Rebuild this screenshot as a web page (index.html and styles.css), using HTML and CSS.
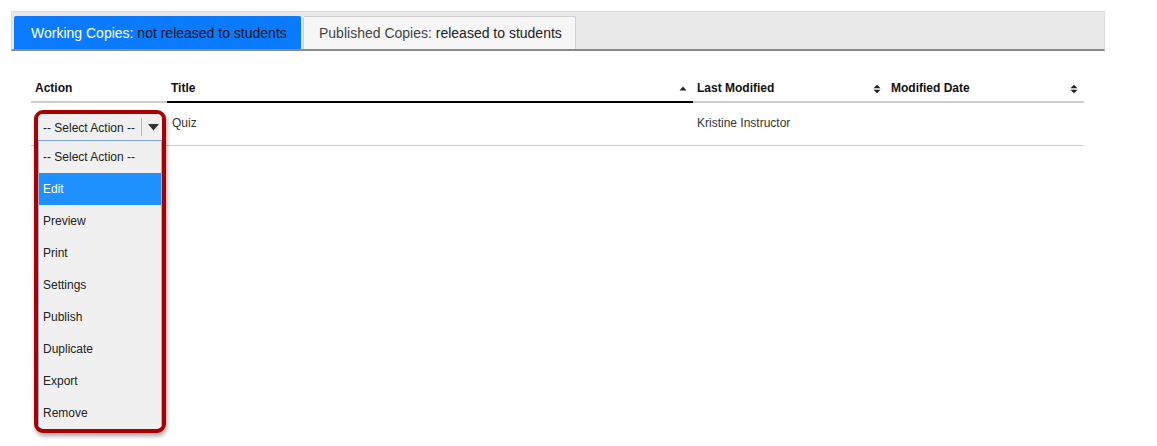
FILE: index.html
```html
<!DOCTYPE html>
<html>
<head>
<meta charset="utf-8">
<link rel="stylesheet" href="styles.css">
</head>
<body>
<div class="tabs">
  <div class="tab active"><span><span class="lbl">Working Copies:</span> not released to students</span></div>
  <div class="tab"><span><span class="lbl">Published Copies:</span> released to students</span></div>
</div>
<div class="table-wrap">
<table class="grid">
  <thead>
    <tr>
      <th class="c-action"><span>Action</span></th>
      <th class="c-title sorted"><span>Title</span>
        <svg class="sort" width="8" height="10" viewBox="0 0 8 10"><path d="M0.5 6.5 L4 2.5 L7.5 6.5 Z" fill="#222"/></svg>
      </th>
      <th class="c-mod"><span>Last Modified</span>
        <svg class="sort" width="8" height="10" viewBox="0 0 8 10"><path d="M0.5 4.3 L4 0.8 L7.5 4.3 Z M0.5 5.7 L4 9.2 L7.5 5.7 Z" fill="#222"/></svg>
      </th>
      <th class="c-date"><span>Modified Date</span>
        <svg class="sort" width="8" height="10" viewBox="0 0 8 10"><path d="M0.5 4.3 L4 0.8 L7.5 4.3 Z M0.5 5.7 L4 9.2 L7.5 5.7 Z" fill="#222"/></svg>
      </th>
    </tr>
  </thead>
  <tbody>
    <tr>
      <td class="c-action"></td>
      <td class="c-title">Quiz</td>
      <td class="c-mod">Kristine Instructor</td>
      <td class="c-date"></td>
    </tr>
  </tbody>
</table>
<div class="callout">
  <div class="select">
    <span class="sel-text">-- Select Action --</span>
    <span class="sel-sep"></span>
    <svg class="sel-arrow" width="11" height="7" viewBox="0 0 11 7"><path d="M0 0 L11 0 L5.5 6.5 Z" fill="#333"/></svg>
  </div>
  <ul class="options">
    <li>-- Select Action --</li>
    <li class="hl">Edit</li>
    <li>Preview</li>
    <li>Print</li>
    <li>Settings</li>
    <li>Publish</li>
    <li>Duplicate</li>
    <li>Export</li>
    <li>Remove</li>
  </ul>
</div>
</div>
</body>
</html>
```
FILE: styles.css
```css
html, body {
  margin: 0;
  padding: 0;
  background: #fff;
  font-family: "Liberation Sans", Arial, sans-serif;
}

body {
  min-height: 446px;
}

.tabs {
  margin: 11px 0 0 11px;
  width: 1090px;
  height: 33px;
  padding: 4px 0 0 2px;
  background: #e8e8e8;
  border: 1px solid #dcdcdc;
  border-bottom: 2px solid #8a8a8a;
  display: flex;
  gap: 2px;
  align-items: flex-end;
}

.tab {
  height: 33px;
  box-sizing: border-box;
  padding: 0 15px;
  display: flex;
  align-items: center;
  font-size: 14px;
  color: #222;
  background: #f6f6f6;
  border: 1px solid #cfcfcf;
  border-bottom: none;
  border-radius: 2px 2px 0 0;
  white-space: nowrap;
}

.tab .lbl { color: #444; }

.tab.active {
  background: #0a7bff;
  border-color: #0a7bff;
  color: #111;
  width: 287px;
  padding-left: 16px;
}

.tab.active .lbl { color: #fff; }

.tab:not(.active) {
  width: 273px;
}

.table-wrap {
  position: relative;
  margin: 22px 0 0 31px;
  width: 1053px;
}

.grid {
  border-collapse: collapse;
  table-layout: fixed;
  width: 1053px;
}

.grid th, .grid td {
  box-sizing: border-box;
}

.grid th {
  height: 29px;
  padding: 2px 4px 0 4px;
  text-align: left;
  font-size: 12px;
  font-weight: bold;
  color: #111;
  border-bottom: 2px solid #cccccc;
  position: relative;
  vertical-align: middle;
}

.grid th.sorted { border-bottom-color: #000; }

.grid th .sort {
  position: absolute;
  right: 6px;
  top: 11px;
}

.c-action { width: 136px; }
.c-title { width: 526px; }
.c-mod { width: 194px; }
.c-date { width: 197px; }

.grid td {
  height: 43px;
  padding: 13px 4px 0 5px;
  vertical-align: top;
  font-size: 12px;
  line-height: 14px;
  color: #333;
  border-bottom: 1px solid #cccccc;
}

.grid td.c-mod { padding-left: 4px; }

.callout {
  position: absolute;
  left: 3px;
  top: 37px;
  width: 124px;
  border: 4px solid #a80000;
  border-radius: 9px;
  background: #f0f0f0;
  box-shadow: 1px 3px 4px rgba(0, 0, 0, 0.35);
  overflow: hidden;
  z-index: 5;
}

.select {
  height: 26px;
  display: flex;
  align-items: center;
  background: #f0f0f0;
  border-bottom: 1px solid #7da2d6;
}

.sel-text {
  padding: 2px 0 0 5px;
  font-size: 12px;
  color: #222;
  width: 98px;
  white-space: nowrap;
}

.sel-sep {
  width: 1px;
  height: 18px;
  background: #b8b8b8;
}

.sel-arrow {
  margin-left: 6px;
}

.options {
  list-style: none;
  margin: 0;
  padding: 0;
  border-left: 1px solid #9db1cf;
  border-right: 1px solid #9db1cf;
}

.options li {
  height: 32px;
  box-sizing: border-box;
  padding: 1px 0 0 4px;
  line-height: 31px;
  font-size: 12px;
  color: #222;
  white-space: nowrap;
}

.options li.hl {
  background: #1e90ff;
  color: #fff;
}
```
